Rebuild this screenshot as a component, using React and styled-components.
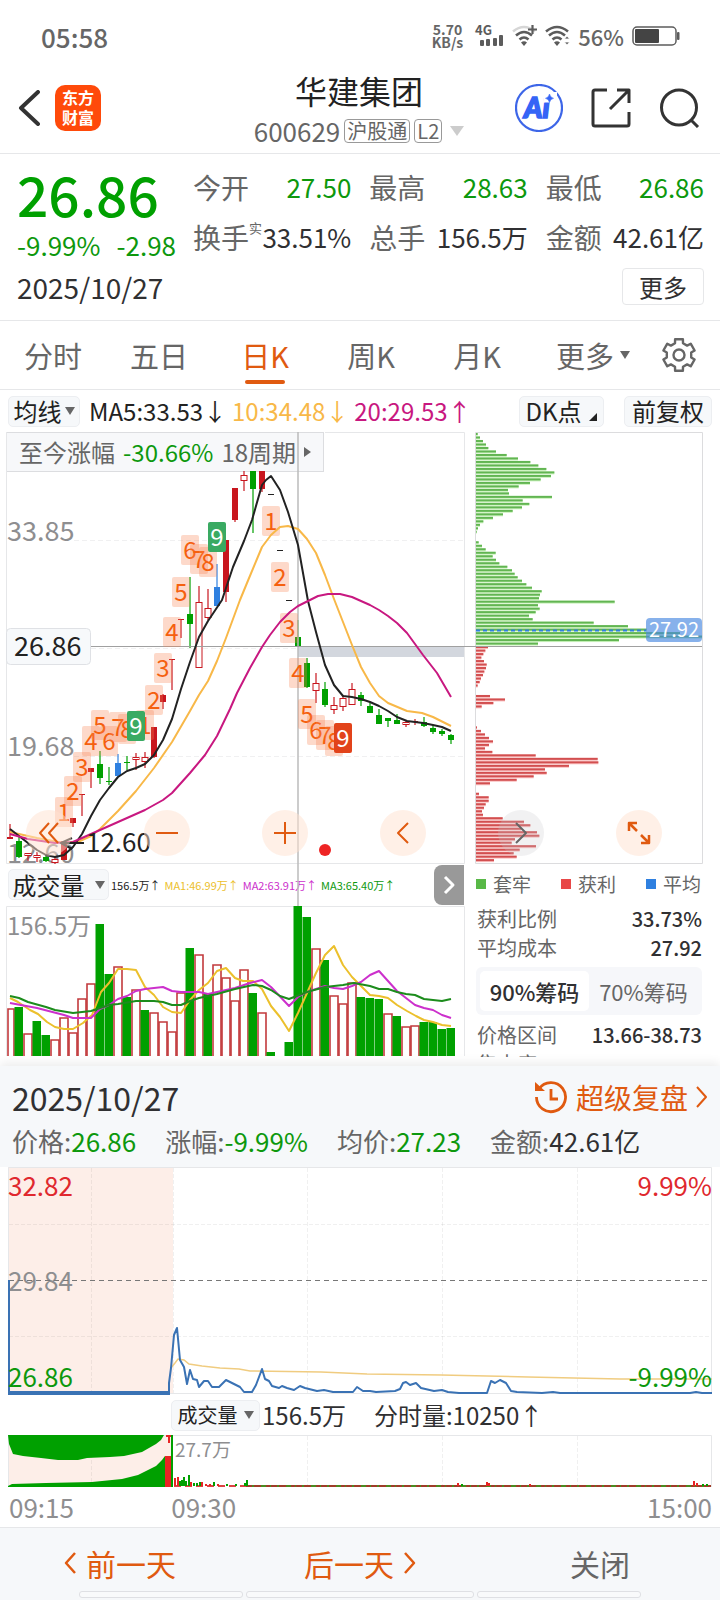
import React, { useState } from "react";
import styled, { createGlobalStyle } from "styled-components";

const C = {
  ink: "#303032",
  sub: "#666",
  mute: "#8e8e90",
  green: "#0d980d",
  candle: "#00a000",
  red: "#c8161e",
  orange: "#e05a10",
  blue: "#2f80e0",
  yellow: "#f8b848",
  pink: "#c81880",
  panel: "#f6f8fa",
  line: "#e6e7e9",
};

const Global = createGlobalStyle`
  *, *::before, *::after { box-sizing: border-box; }
  body {
    margin: 0;
    background: #fff;
    color: ${C.ink};
    font-family: "Noto Sans CJK SC", "Noto Sans", sans-serif;
  }
  button { font: inherit; color: inherit; background: none; border: 0; padding: 0; margin: 0; cursor: pointer; }
  svg { display: block; }
`;

const Page = styled.div`
  width: 100%;
  overflow: hidden;
`;

/* ---------- status bar ---------- */
const StatusBar = styled.div`
  display: flex;
  align-items: center;
  justify-content: space-between;
  height: 68px;
  padding: 4px 40px 0 41px;
  color: ${C.sub};
  font-size: 26px;
  font-weight: 500;
`;
const StatusIcons = styled.div`
  display: flex;
  align-items: center;
  gap: 8px;
  font-size: 22px;
  line-height: 28px;
`;
const NetSpeed = styled.span`
  margin-right: 3px;
  font-size: 14px;
  line-height: 13px;
  font-weight: 700;
  text-align: center;
`;

/* ---------- title bar ---------- */
const TitleBar = styled.header`
  display: grid;
  grid-template-columns: 1fr auto 1fr;
  align-items: center;
  height: 86px;
  padding: 0 20px 6px 18px;
  border-bottom: 1px solid ${C.line};
`;
const BarSide = styled.div`
  display: flex;
  align-items: center;
  justify-content: ${(p) => (p.$end ? "flex-end" : "flex-start")};
  gap: ${(p) => (p.$end ? 28 : 15)}px;
`;
const Logo = styled.div`
  width: 46px;
  height: 46px;
  padding: 2px 0;
  border-radius: 10px;
  background: #ff4a0a;
  color: #fff;
  font-size: 16px;
  line-height: 20px;
  font-weight: 700;
  text-align: center;
`;
const Stock = styled.div`
  display: flex;
  flex-direction: column;
  align-items: center;
`;
const StockName = styled.h1`
  margin: 0;
  padding-bottom: 3px;
  font-size: 32px;
  line-height: 44px;
  font-weight: 400;
  color: #222;
`;
const StockMeta = styled.div`
  display: flex;
  align-items: center;
  gap: 4px;
  font-size: 26px;
  line-height: 32px;
  color: ${C.sub};
`;
const Tag = styled.span`
  padding: 0 2px;
  border: 1px solid #999;
  border-radius: 4px;
  font-size: 20px;
  line-height: 22px;
`;
const Triangle = styled.i`
  width: 0;
  height: 0;
  margin-left: ${(p) => p.$gap || 0}px;
  border: ${(p) => p.$size || 6}px solid transparent;
  border-top: ${(p) => (p.$size || 6) + 3}px solid ${(p) => p.$color || C.sub};
  border-bottom: 0;
`;

/* ---------- quote ---------- */
const Quote = styled.section`
  display: grid;
  grid-template-columns: 159px 1fr;
  column-gap: 17px;
  padding: 8px 16px 15px 17px;
  border-bottom: 1px solid ${C.line};
`;
const Price = styled.div`
  font-size: 55px;
  line-height: 62px;
  font-weight: 500;
  color: ${C.candle};
`;
const Change = styled.div`
  display: flex;
  justify-content: space-between;
  margin-top: 4px;
  font-size: 26px;
  line-height: 34px;
  color: ${C.green};
`;
const Stats = styled.dl`
  display: grid;
  grid-template-columns: repeat(3, minmax(0, 1fr));
  column-gap: 18px;
  margin: 0;
`;
const Stat = styled.div`
  display: flex;
  justify-content: space-between;
  font-size: 28px;
  line-height: 50px;
  white-space: nowrap;
`;
const StatLabel = styled.dt`
  color: ${C.sub};
  sup { position: relative; top: -6px; font-size: 13px; line-height: 0; }
`;
const StatValue = styled.dd`
  margin: 0;
  font-size: 26px;
  color: ${(p) => (p.$down ? C.green : C.ink)};
`;
const QuoteFoot = styled.div`
  grid-column: 1 / -1;
  display: flex;
  align-items: center;
  justify-content: space-between;
  padding-top: 6px;
`;
const DateText = styled.time`
  font-size: ${(p) => (p.$large ? 32 : 28)}px;
  line-height: 36px;
`;
const MoreButton = styled.button`
  width: 82px;
  height: 37px;
  border: 1px solid ${C.line};
  border-radius: 4px;
  font-size: 24px;
  line-height: 32px;
`;

/* ---------- period tabs ---------- */
const Tabs = styled.nav`
  display: grid;
  grid-template-columns: repeat(5, 106fr) 126fr 46fr;
  align-items: center;
  justify-items: center;
  height: 69px;
  padding-right: 18px;
  border-bottom: 1px solid ${C.line};
`;
const Tab = styled.button`
  position: relative;
  display: flex;
  align-items: center;
  height: 68px;
  font-size: 29px;
  white-space: nowrap;
  color: ${(p) => (p.$active ? C.orange : C.sub)};
  &::after {
    content: "";
    position: absolute;
    left: 50%;
    bottom: 5px;
    width: 40px;
    height: 4px;
    margin-left: -20px;
    border-radius: 2px;
    background: ${(p) => (p.$active ? C.orange : "transparent")};
  }
`;

/* ---------- indicator header ---------- */
const Indicator = styled.div`
  display: flex;
  align-items: center;
  height: 42px;
  padding: 0 8px;
  font-size: 24px;
  line-height: 34px;
  white-space: nowrap;
`;
const Chip = styled.button`
  display: flex;
  align-items: center;
  justify-content: center;
  flex: none;
  width: ${(p) => p.$w}px;
  height: 31px;
  margin-left: ${(p) => p.$ml || 0}px;
  border: 1px solid #eceef1;
  border-radius: 5px;
  background: ${C.panel};
  font-size: ${(p) => p.$fs || 24}px;
  line-height: 26px;
  color: #222;
`;
const Averages = styled.div`
  display: flex;
  gap: 5px;
  flex: 1;
  margin-left: 9px;
`;
const Tone = styled.span`
  color: ${(p) => p.$c};
`;

/* ---------- chart block ---------- */
const ChartBlock = styled.section`
  position: relative;
  display: grid;
  grid-template-columns: 459fr 228fr;
  gap: 10px;
  padding: 0 17px 0 6px;
`;
const Column = styled.div`
  position: relative;
  min-width: 0;
`;
const Plot = styled.svg`
  position: relative;
  width: 100%;
  height: auto;
  overflow: visible;
  pointer-events: none;
`;
const SpanBanner = styled.button`
  position: absolute;
  left: 0;
  top: 0;
  display: flex;
  align-items: center;
  gap: 8px;
  height: 40px;
  padding: 0 12px;
  border: 1px solid #dcdde0;
  background: #f7f8fa;
  font-size: 24px;
  line-height: 36px;
  color: ${C.sub};
  white-space: nowrap;
`;
const RightArrow = styled.i`
  border: 5px solid transparent;
  border-left: 7px solid ${C.sub};
  border-right: 0;
`;
const VolumeHead = styled.div`
  display: flex;
  align-items: center;
  height: 41px;
  padding-left: 2px;
  white-space: nowrap;
  font-size: 11px;
`;
const VolumeFigures = styled.div`
  display: flex;
  gap: 4px;
  margin-left: 2px;
`;
const NextButton = styled.button`
  display: flex;
  align-items: center;
  justify-content: center;
  width: 30px;
  height: 40px;
  margin-left: auto;
  margin-right: 1px;
  border-radius: 8px 0 0 8px;
  background: #999;
`;
const Controls = styled.div`
  position: absolute;
  left: 26px;
  right: 58px;
  top: 378px;
  display: flex;
  justify-content: space-between;
`;
const Round = styled.button`
  display: flex;
  align-items: center;
  justify-content: center;
  width: 46px;
  height: 46px;
  border-radius: 50%;
  background: ${(p) => (p.$gray ? "rgba(200,200,205,.25)" : "rgba(255,225,208,.5)")};
`;

const Legend = styled.div`
  display: flex;
  justify-content: space-between;
  height: 40px;
  padding: 0 2px 0 1px;
  font-size: 19px;
  line-height: 40px;
  color: ${C.sub};
`;
const LegendItem = styled.span`
  display: flex;
  align-items: center;
  gap: 7px;
  &::before { content: ""; width: 10px; height: 10px; background: ${(p) => p.$c}; }
`;
const ChipInfo = styled.div`
  height: 153px;
  overflow: hidden;
`;
const InfoRow = styled.div`
  display: flex;
  justify-content: space-between;
  padding: 0 1px 0 2px;
  font-size: 20px;
  line-height: 29px;
  color: ${C.sub};
  b { font-weight: 500; color: ${C.ink}; }
`;
const Segmented = styled.div`
  display: grid;
  grid-template-columns: 1fr 1fr;
  height: 48px;
  margin: 5px 1px 5px;
  padding: 4px;
  border-radius: 6px;
  background: #f6f7fa;
`;
const Segment = styled.button`
  border-radius: 5px;
  font-size: 22px;
  line-height: 36px;
  white-space: nowrap;
  background: ${(p) => (p.$active ? "#fff" : "transparent")};
  color: ${(p) => (p.$active ? C.ink : C.sub)};
  font-weight: ${(p) => (p.$active ? 500 : 400)};
`;

/* ---------- day sheet ---------- */
const Sheet = styled.section`
  position: relative;
  margin-top: 9px;
  box-shadow: 0 -3px 10px rgba(0, 0, 0, 0.08);
  background: #fff;
`;
const SheetHead = styled.div`
  padding: 8px 12px 0;
  height: 101px;
  background: ${C.panel};
`;
const SheetTop = styled.div`
  display: flex;
  align-items: center;
  justify-content: space-between;
  height: 45px;
`;
const Replay = styled.button`
  display: flex;
  align-items: center;
  gap: 8px;
  font-size: 28px;
  line-height: 40px;
  color: ${C.orange};
`;
const DayFigures = styled.div`
  display: flex;
  gap: 29px;
  font-size: 26px;
  line-height: 44px;
  color: ${C.sub};
  white-space: nowrap;
`;
const DayVolumeHead = styled.div`
  display: flex;
  align-items: center;
  height: 40px;
  padding: 0 8px 0 171px;
  font-size: 24px;
  line-height: 34px;
  white-space: nowrap;
`;
const Spaced = styled.span`
  margin-left: ${(p) => p.$ml}px;
`;
const TimeAxis = styled.div`
  display: grid;
  grid-template-columns: 162fr 270fr 270fr;
  height: 39px;
  padding: 0 8px 0 9px;
  font-size: 26px;
  line-height: 38px;
  color: ${C.mute};
  span:last-child { text-align: right; }
`;
const BottomBar = styled.footer`
  display: grid;
  grid-template-columns: repeat(3, 1fr);
  height: 64px;
  border-top: 1px solid ${C.line};
  background: ${C.panel};
`;
const BottomButton = styled.button`
  display: flex;
  align-items: center;
  justify-content: center;
  gap: 9px;
  padding-top: 6px;
  font-size: 30px;
  line-height: 40px;
  color: ${(p) => (p.$plain ? C.sub : C.orange)};
`;
const Handles = styled.div`
  display: grid;
  grid-template-columns: 164fr 227fr 164fr;
  gap: 3px;
  height: 9px;
  padding: 0 79px 2px;
  background: ${C.panel};
`;
const Handle = styled.i`
  border: 1px solid #dfe0e4;
  border-radius: 3px;
  background: #f9fafb;
`;

/* ---------- icons ---------- */
const Stroke = ({ w, h, d, sw = 2, color = C.orange, cap = "butt" }) => (
  <svg width={w} height={h} viewBox={`0 0 ${w} ${h}`} fill="none" stroke={color} strokeWidth={sw} strokeLinecap={cap} strokeLinejoin="round" aria-hidden="true">
    <path d={d} />
  </svg>
);

const SignalIcon = () => (
  <svg width="30" height="24" viewBox="0 0 30 24" fill="#5c5c5c" overflow="visible" aria-hidden="true">
    <text x="1" y="11" fontSize="13" fontWeight="700">4G</text>
    <rect x="6" y="16" width="4" height="6" rx="1" />
    <rect x="12" y="15" width="4" height="7" rx="1" />
    <rect x="19" y="14" width="4" height="8" rx="1" />
    <rect x="25" y="11" width="4" height="11" rx="1" />
  </svg>
);
const WifiIcon = ({ plus }) => (
  <svg width="25" height="22" viewBox="0 0 25 22" fill="none" stroke="#5c5c5c" strokeWidth="2.6" aria-hidden="true">
    <path d="M1 6.5Q12 -2.5 23 6.5" stroke={plus ? "#d6d6d6" : "#5c5c5c"} />
    <path d="M4 10.5Q12 3.5 20 10.5" />
    <path d="M7.500 14.500Q12 10.500 16.500 14.500" />
    <path d="M9 17.500L12 21L15 17.500Q12 15 9 17.500Z" fill="#5c5c5c" stroke="none" />
    {plus ? (
      <path d="M16 4.500H25M20.500 0V9" stroke="#5c5c5c" strokeWidth="2.200" />
    ) : (
      <path d="M22 11L24.500 14H19.500ZM22 20L24.500 17H19.500Z" fill="#5c5c5c" stroke="#fff" strokeWidth=".8" />
    )}
  </svg>
);
const BatteryIcon = () => (
  <svg width="48" height="20" viewBox="0 0 48 20" aria-hidden="true">
    <rect x="1" y="1" width="43" height="18" rx="4" fill="none" stroke="#5c5c5c" strokeWidth="1.500" />
    <rect x="3" y="3" width="24" height="14" rx="1" fill="#444" />
    <rect x="45" y="6" width="2.500" height="8" rx="1" fill="#5c5c5c" />
  </svg>
);
const AiIcon = () => (
  <svg width="48" height="48" viewBox="0 0 48 48" aria-hidden="true">
    <circle cx="24" cy="24" r="23" fill="none" stroke="#3d66e8" strokeWidth="2.200" />
    <text x="9" y="34" fontFamily="Lato" fontSize="28" fontWeight="900" fontStyle="italic" fill="#3564f6" stroke="#3564f6" strokeWidth="1.600">Ai</text>
    <path d="M29 8H42V18.500H29Z" fill="#fff" />
    <path d="M34.500 10Q35.200 13.600 38.500 14.300Q35.200 15 34.500 18.500Q33.800 15 30.500 14.300Q33.800 13.600 34.500 10Z" fill="#3564f6" stroke="#3564f6" strokeWidth=".6" />
  </svg>
);
const gearPath = (() => {
  const pts = [];
  for (let i = 0; i < 6; i++) {
    [[-14, 16.2], [14, 16.2], [19, 12.4], [41, 12.4]].forEach(([a, r]) => {
      const t = ((i * 60 + a - 90) * Math.PI) / 180;
      pts.push(`${(18 + r * Math.cos(t)).toFixed(1)} ${(18 + r * Math.sin(t)).toFixed(1)}`);
    });
  }
  return `M${pts.join("L")}Z`;
})();
const GearIcon = () => (
  <svg width="36" height="36" viewBox="0 0 36 36" fill="none" stroke={C.sub} strokeWidth="2.400" strokeLinejoin="round" aria-hidden="true">
    <path d={gearPath} />
    <circle cx="18" cy="18" r="5.500" />
  </svg>
);
const ReplayIcon = () => (
  <svg width="34" height="34" viewBox="0 0 34 34" fill="none" stroke={C.orange} strokeWidth="2.800" aria-hidden="true">
    <path d="M5 9A14.500 14.500 0 1 1 2.500 17" />
    <path d="M17 9V19H24" />
    <path d="M1 2V11H11Z" fill={C.orange} stroke="none" />
  </svg>
);

/* ---------- data ---------- */
const cx = (i) => 10 + 9 * i;
/* kind, body top, body bottom, wick top, wick bottom */
const candles = [
  ["r", 837, 839, 824, 839], ["g", 841, 857, 837, 858], ["h", 853, 856, 853, 861], ["h", 855, 858, 852, 862],
  ["g", 857, 861, 855, 862], ["h", 859, 863, 857, 864], ["r", 841, 860, 841, 860], ["r", 818, 823, 818, 827],
  ["r", 794, 795, 794, 816], ["r", 768, 772, 768, 788], ["g", 764, 778, 751, 784], ["g", 781, 782, 767, 785],
  ["b", 763, 776, 754, 777], ["g", 762, 763, 756, 770], ["h", 757, 760, 753, 770], ["h", 757, 762, 752, 768],
  ["r", 727, 757, 727, 758], ["r", 695, 702, 694, 709], ["r", 659, 660, 659, 690], ["r", 619, 620, 619, 638],
  ["g", 614, 624, 577, 648], ["h", 602, 668, 586, 668], ["h", 608, 618, 589, 620], ["b", 587, 606, 564, 606],
  ["r", 540, 592, 540, 602], ["r", 488, 520, 488, 522], ["h", 475, 481, 471, 491], ["g", 471, 489, 471, 533],
  ["r", 471, 489, 471, 492], ["d", 494, 495, 494, 495], ["d", 550, 551, 550, 551], ["d", 600, 601, 600, 601],
  ["g", 637, 647, 620, 647], ["g", 663, 687, 658, 688], ["h", 683, 691, 673, 703], ["g", 689, 705, 682, 707],
  ["h", 705, 710, 697, 714], ["h", 698, 707, 695, 711], ["h", 689, 705, 683, 705], ["g", 695, 701, 692, 706],
  ["g", 706, 713, 703, 713], ["g", 715, 724, 709, 724], ["g", 718, 721, 718, 727], ["g", 720, 724, 714, 724],
  ["h", 722, 725, 720, 727], ["r", 721, 722, 719, 725], ["g", 722, 726, 717, 727], ["g", 728, 732, 725, 734],
  ["g", 731, 734, 729, 736], ["g", 735, 740, 734, 744],
];
const ma5 = "10,829 19,836 28,843 37,850 46,855 55,857 64,855 73,847 82,834 91,816 100,800 109,788 118,777 127,771 136,768 145,764 154,755 163,740 172,719 181,689 190,662 199,637 208,621 222,600 233,567 244,541 252,520 262,485 266,480 271,476 280,490 288,512 298,545 308,601 316,632 325,665 334,685 343,696 352,697 361,699 370,702 379,706 388,711 397,717 407,721 423,723 433,725 442,727 451,731";
const ma10 = "10,832 37,838 64,843 80,841 91,836 100,829 109,820 118,811 136,791 154,768 172,742 190,711 199,695 208,681 217,661 226,638 240,600 247,583 262,547 271,535 280,527 288,526 298,529 307,539 316,553 325,575 334,599 343,622 352,645 361,667 370,683 379,696 388,703 407,711 422,713 433,717 451,726";
const ma20 = "10,834 28,839 55,843 73,842 91,834 109,826 127,818 145,810 163,800 172,793 190,773 205,755 217,736 230,709 237,693 250,668 262,647 270,635 280,622 290,612 298,606 308,601 318,596 328,594 340,594 352,597 361,601 370,605 379,610 388,616 397,623 407,633 423,655 437,673 451,697";
const marks = [
  ["1", 0, 64, 812], ["2", 0, 73, 791], ["3", 0, 82, 767], ["4", 0, 91, 741], ["5", 0, 100, 725], ["6", 0, 109, 741],
  ["7", 0, 118, 727], ["8", 0, 127, 729], ["1", 0, 145, 725], ["9", 1, 136, 726], ["2", 0, 154, 700], ["3", 0, 163, 668],
  ["4", 0, 172, 632], ["5", 0, 181, 592], ["6", 0, 190, 550], ["7", 0, 199, 559], ["8", 0, 208, 562], ["9", 1, 217, 537],
  ["1", 0, 271, 521], ["2", 0, 280, 577], ["3", 0, 289, 628], ["4", 0, 298, 673], ["5", 0, 307, 714], ["6", 0, 316, 730],
  ["7", 0, 325, 735], ["8", 0, 334, 741], ["9", 2, 343, 738],
];
const volumes = [
  ["r", 1008], ["g", 1007], ["r", 1033], ["g", 1021], ["g", 1035], ["r", 1039], ["r", 1017], ["r", 1032], ["r", 998], ["r", 983],
  ["g", 924], ["g", 974], ["r", 966], ["g", 997], ["r", 989], ["g", 1010], ["r", 1012], ["r", 1021], ["r", 1031], ["r", 992],
  ["g", 948], ["r", 954], ["g", 993], ["r", 964], ["r", 977], ["r", 1000], ["r", 969], ["g", 993], ["r", 1012], ["g", 1052],
  null, ["g", 1042], ["g", 906], ["g", 917], ["r", 948], ["g", 960], ["r", 995], ["r", 1003], ["r", 982], ["g", 997],
  ["g", 998], ["g", 999], ["r", 1013], ["g", 1016], ["r", 1026], ["r", 1025], ["g", 1022], ["g", 1022], ["g", 1029], ["g", 1028],
];
const vol1 = "10,998 18,1002 30,1010 38,1014 47,1022 55,1027 64,1029 73,1029 83,1023 92,1015 101,992 109,983 118,969 127,969 136,970 145,987 154,995 163,1007 172,1012 181,1013 190,1000 199,990 208,983 217,971 226,968 235,978 243,981 253,981 262,989 271,1006 280,1017 289,1031 298,1013 307,993 316,973 325,955 334,946 343,965 352,977 361,986 370,995 379,996 388,998 397,1005 407,1011 416,1016 424,1020 433,1022 442,1025 451,1026";
const vol2 = "10,1003 37,1008 64,1015 73,1018 91,1018 100,1009 109,1005 118,999 127,996 136,991 145,989 163,987 172,991 181,992 199,992 208,994 217,992 235,988 250,983 262,980 271,987 289,1006 298,997 307,992 325,986 334,988 343,989 352,986 361,982 370,975 379,971 388,981 397,991 406,998 415,1005 424,1008 433,1010 442,1015 451,1018";
const vol3 = "10,996 19,998 28,1002 46,1007 55,1010 73,1013 91,1011 109,1005 118,1004 136,1001 154,1001 163,1002 172,1005 181,1005 190,1001 199,998 217,994 235,989 253,985 262,986 271,990 280,996 289,999 307,992 325,987 343,985 354,983 370,986 379,989 388,989 397,992 406,994 415,995 424,999 433,1000 442,1001 451,999";
/* chip distribution, one length in thirds of a pixel per price step */
const chips = [
  5, 12, 21, 30, 37, 60, 92, 126, 163, 187, 211, 235, 225, 194, 162, 128, 96, 99, 228, 140, 160, 138, 110, 81, 51, 22, 12, 6, 2, 0, 0,
  8, 18, 29, 59, 50, 60, 70, 94, 108, 116, 125, 138, 151, 168, 197, 192, 189, 416, 186, 191, 179, 159, 170, 353, 456, 512, 612, 678, 429, 186,
  36, 28, 22, 16, 24, 32, 30, 25, 21, 15, 11, 5, 0, 0, 42, 87, 52, 17, 0, 0, 0, 0, 0, 3, 15, 27, 39, 51, 39, 27, 49, 179, 365, 367, 279, 207, 212,
  173, 122, 42, 0, 0, 9, 38, 38, 29, 24, 18, 21, 80, 144, 163, 135, 183, 190, 117, 107, 180, 131, 113, 122, 54,
];
const dayLine = "9,1280 9,1393 169,1393 169,1383 171,1368 174,1335 177,1328 180,1360 184,1367 187,1384 190,1370 193,1379 197,1380 199,1387 204,1381 208,1381 212,1387 219,1387 226,1380 232,1383 240,1387 244,1392 252,1392 256,1385 262,1369 265,1379 269,1381 272,1386 279,1388 282,1386 287,1388 294,1390 300,1386 305,1388 317,1391 324,1390 333,1392 353,1392 357,1387 363,1391 370,1391 376,1392 395,1391 400,1389 403,1383 406,1382 410,1385 416,1383 421,1388 434,1391 442,1390 448,1392 459,1393 487,1393 491,1381 495,1383 500,1380 506,1383 511,1391 517,1392 542,1393 553,1392 560,1393 690,1393 696,1392 702,1393 712,1393";
const dayAvg = "171,1368 175,1363 178,1359 184,1360 189,1364 202,1366 220,1368 239,1369 250,1371 321,1372 367,1374 441,1375 528,1377 620,1379 712,1379";
const dayBars = [
  [174, 8, 1], [177, 9, 1], [179, 5, 0], [181, 6, 0], [183, 9, 0], [185, 5, 0], [188, 11, 0], [190, 4, 1], [193, 3, 0], [196, 3, 0],
  [199, 4, 0], [201, 4, 1], [205, 2, 1], [209, 2, 1], [213, 4, 0], [217, 2, 1], [226, 2, 0], [235, 2, 0], [244, 3, 0], [246, 6, 0],
  [457, 3, 1], [461, 2, 0], [486, 4, 1], [488, 3, 1], [529, 2, 1], [693, 5, 1], [696, 3, 1], [702, 2, 0], [706, 2, 0],
];

/* ---------- charts ---------- */
const bodyColor = { r: C.red, g: C.candle, b: C.blue, h: C.red, d: "#222" };

const KLine = () => (
  <Plot viewBox="6 432 459 432" role="img" aria-label="日K线图">
    <g stroke={C.line} fill="none">
      <path d="M6.500 432V863.500H464.500V432.500H325" strokeWidth="1" />
      <path d="M74 540.500H464M91 648.500H464M74 756.500H464" stroke="#f0f0f1" strokeDasharray="5 3" />
    </g>
    <rect x="298" y="647" width="166" height="10" fill="#d3d7de" />
    <g fill={C.mute} fontSize="27">
      <text x="7" y="541">33.85</text>
      <text x="7" y="756">19.68</text>
      <text x="7" y="863">12.60</text>
    </g>
    {candles.map(([k, t, b, wt, wb], i) => (
      <g key={i} fill={k === "h" ? "#fff" : bodyColor[k]} stroke={bodyColor[k]}>
        {k !== "d" && <path d={`M${cx(i)} ${wt}V${wb}`} strokeWidth="2" strokeOpacity=".6" />}
        {k === "h" ? (
          <rect x={cx(i) - 3} y={t + 0.5} width="6" height={Math.max(b - t - 1, 1)} />
        ) : (
          <rect x={cx(i) - 3} y={t} width="6" height={Math.max(b - t, 1)} stroke="none" />
        )}
      </g>
    ))}
    <path d="M298 432V906" stroke="#bbb" strokeWidth="2" strokeOpacity=".75" />
    <path d="M90 646.500H475" stroke="#a0a0a0" />
    <g fontSize="24" textAnchor="middle">
      {marks.map(([n, kind, x, y], i) => (
        <g key={i}>
          <rect x={x - 9} y={y - 15} width="18" height="30" rx="2" fill={["rgba(250,130,80,.3)", "#3aaa62", "#e2431a"][kind]} />
          <text x={x} y={y + 9} fill={kind ? "#fff" : "#f5600f"}>{n}</text>
        </g>
      ))}
    </g>
    <g fill="none" strokeWidth="2" strokeLinejoin="round">
      <polyline points={ma10} stroke={C.yellow} />
      <polyline points={ma5} stroke="#222" />
      <polyline points={ma20} stroke={C.pink} />
      <path d="M72 838L61 843L72 849M61 843H84" stroke="#222" />
    </g>
    <text x="86" y="852" fontSize="26" fill="#222">12.60</text>
    <rect x="6.500" y="628.500" width="84" height="36" rx="4" fill="#f7f9fb" stroke="#dfe1e5" />
    <text x="14" y="656" fontSize="27" fill="#222">26.86</text>
    <circle cx="325" cy="850" r="6" fill="#ee2424" />
  </Plot>
);

const VolumePlot = () => (
  <Plot viewBox="6 905 459 151" role="img" aria-label="成交量图">
    <path d="M6.500 1056V906.500H464.500V1056" fill="none" stroke={C.line} />
    <text x="7" y="935" fontSize="24" fill={C.mute}>156.5万</text>
    {volumes.map((v, i) => {
      if (!v) return null;
      const [k, y] = v;
      const x = i ? cx(i) - 5 : 7;
      const w = cx(i) + 4 - x;
      return k === "g" ? (
        <rect key={i} x={x + 0.5} y={y} width={w - 0.5} height={1056 - y} fill={C.candle} />
      ) : (
        <path key={i} d={`M${x + 1} 1056V${y + 1}H${x + w}V1056`} fill="#fff" stroke="#c23a3c" strokeWidth="1.600" />
      );
    })}
    <g fill="none" strokeWidth="2" strokeLinejoin="round">
      <polyline points={vol1} stroke="#ecc02c" />
      <polyline points={vol2} stroke="#cc30cc" />
      <polyline points={vol3} stroke="#1c8c1c" />
    </g>
  </Plot>
);

const ChipPlot = () => (
  <Plot viewBox="475 432 228 432" role="img" aria-label="筹码分布图">
    <path d="M475.500 432.500H702.500V863.500H475.500Z" fill="none" stroke="#dcdcde" />
    {chips.map((n, k) => {
      const y = 433 + k * 3.493;
      const up = k < 61;
      return n ? (
        <g key={k}>
          <rect x="476" y={y} width={n / 3} height="3" fill={up ? "#cdf3bf" : "#fbc4c4"} />
          <rect x="476" y={y} width={n / 3} height="2" fill={up ? "#62b552" : "#d24f50"} />
        </g>
      ) : null;
    })}
    <path d="M476 630.500H646" stroke={C.blue} strokeWidth="2" strokeDasharray="4 3" />
    <path d="M475 646.500H702" stroke="#a0a0a0" />
    <rect x="646" y="618" width="56" height="24" rx="4" fill="rgba(70,135,225,.65)" />
    <text x="674" y="637" fontSize="20" fill="#fff" textAnchor="middle">27.92</text>
  </Plot>
);

const DayPrice = () => (
  <Plot viewBox="0 1167 720 228" role="img" aria-label="分时图">
    <rect x="8" y="1167" width="165" height="226" fill="#fdeee8" />
    <path d="M8.500 1393.500V1167.500H711.500V1393.500Z" fill="none" stroke={C.line} />
    <path d="M91.500 1168V1393M173.500 1168V1393M307.500 1168V1393M442.500 1168V1393M577.500 1168V1393M9 1224.500H711M9 1336.500H711" stroke="#000" strokeOpacity=".06" strokeDasharray="4 2" />
    <g fontSize="26">
      <text x="8" y="1196" fill="#e0282e">32.82</text>
      <text x="8" y="1291" fill={C.mute}>29.84</text>
      <text x="712" y="1196" fill="#e0282e" textAnchor="end">9.99%</text>
    </g>
    <path d="M9 1280.500H711" stroke="#777" strokeDasharray="5 4" />
    <polyline points={dayAvg} fill="none" stroke="#f0cc80" strokeWidth="1.500" />
    <polyline points={dayLine} fill="none" stroke="#3a72b4" strokeWidth="2" strokeLinejoin="round" />
    <path d="M8 1393H170" stroke="#3a72b4" strokeWidth="4" />
    <g fontSize="26" fill={C.green}>
      <text x="8" y="1387">26.86</text>
      <text x="712" y="1387" textAnchor="end">-9.99%</text>
    </g>
  </Plot>
);

const DayVolume = () => (
  <Plot viewBox="0 1435 720 53" role="img" aria-label="分时成交量图">
    <rect x="8" y="1435" width="165" height="52" fill="#fdeee8" />
    <path d="M8.500 1487V1435.500H711.500V1487" fill="none" stroke={C.line} />
    <path d="M91.500 1436V1486M307.500 1436V1486M442.500 1436V1486M577.500 1436V1486" stroke="#000" strokeOpacity=".06" strokeDasharray="4 2" />
    <g fill={C.candle}>
      <path d="M8 1435L9 1444L13 1454L23 1456L41 1458L58 1460H78L87 1458L110 1457L124 1456L142 1452L156 1444L161 1440L164 1435Z" />
      <path d="M8 1487V1486L12 1484L46 1483L92 1482L122 1479L138 1475L156 1466L162 1460L165 1456V1487Z" />
      <rect x="171" y="1435" width="2" height="52" />
    </g>
    <path d="M165 1456H171V1487H165ZM166 1435H171V1437H170V1443H168V1437H166Z" fill="#e82424" />
    <path d="M174 1486H246" stroke="#d44" strokeWidth="2" strokeDasharray="7 4" />
    <path d="M246 1486H711" stroke="#a03c28" strokeWidth="2" />
    <path d="M252 1486H711" stroke="#4b8a20" strokeWidth="2" strokeDasharray="2 7 5 4 1 6" />
    {dayBars.map(([x, h, up]) => (
      <rect key={x} x={x} y={1486 - h} width="2" height={h} fill={up ? "#e82424" : C.candle} />
    ))}
    <text x="175" y="1457" fontSize="19" fill={C.mute}>27.7万</text>
  </Plot>
);

/* ---------- page ---------- */
export default function App() {
  const [tab, setTab] = useState("日K");
  const [seg, setSeg] = useState("90%筹码");
  return (
    <Page>
      <Global />
      <StatusBar>
        <span>05:58</span>
        <StatusIcons>
          <NetSpeed>5.70<br />KB/s</NetSpeed>
          <SignalIcon />
          <WifiIcon plus />
          <WifiIcon />
          <span>56%</span>
          <BatteryIcon />
        </StatusIcons>
      </StatusBar>

      <TitleBar>
        <BarSide>
          <button aria-label="返回"><Stroke w={22} h={36} d="M20 2L3 18L20 34" sw={4} color="#333" cap="round" /></button>
          <Logo>东方<br />财富</Logo>
        </BarSide>
        <Stock>
          <StockName>华建集团</StockName>
          <StockMeta>
            600629
            <Tag>沪股通</Tag>
            <Tag>L2</Tag>
            <Triangle $size={7} $gap={4} $color="#ccc" />
          </StockMeta>
        </Stock>
        <BarSide $end>
          <button aria-label="AI"><AiIcon /></button>
          <button aria-label="分享"><Stroke w={40} h={40} sw={3} color="#333" d="M16 2H4Q2 2 2 4V36Q2 38 4 38H36Q38 38 38 36V24M26 2H38V15M38 2L19 21" /></button>
          <button aria-label="搜索"><Stroke w={41} h={40} sw={3} color="#333" d="M20 2A17.500 17.500 0 1 0 20 37A17.500 17.500 0 1 0 20 2M32 32L39 39" /></button>
        </BarSide>
      </TitleBar>

      <Quote>
        <div>
          <Price>26.86</Price>
          <Change><span>-9.99%</span><span>-2.98</span></Change>
        </div>
        <Stats>
          <Stat><StatLabel>今开</StatLabel><StatValue $down>27.50</StatValue></Stat>
          <Stat><StatLabel>最高</StatLabel><StatValue $down>28.63</StatValue></Stat>
          <Stat><StatLabel>最低</StatLabel><StatValue $down>26.86</StatValue></Stat>
          <Stat><StatLabel>换手<sup>实</sup></StatLabel><StatValue>33.51%</StatValue></Stat>
          <Stat><StatLabel>总手</StatLabel><StatValue>156.5万</StatValue></Stat>
          <Stat><StatLabel>金额</StatLabel><StatValue>42.61亿</StatValue></Stat>
        </Stats>
        <QuoteFoot>
          <DateText>2025/10/27</DateText>
          <MoreButton>更多</MoreButton>
        </QuoteFoot>
      </Quote>

      <Tabs>
        {["分时", "五日", "日K", "周K", "月K"].map((t) => (
          <Tab key={t} $active={t === tab} onClick={() => setTab(t)}>{t}</Tab>
        ))}
        <Tab>更多<Triangle $size={5} $gap={6} /></Tab>
        <button aria-label="设置"><GearIcon /></button>
      </Tabs>

      <Indicator>
        <Chip $w={72}>均线<Triangle $size={5} $gap={3} /></Chip>
        <Averages>
          <Tone $c="#222">MA5:33.53↓</Tone>
          <Tone $c={C.yellow}>10:34.48↓</Tone>
          <Tone $c={C.pink}>20:29.53↑</Tone>
        </Averages>
        <Chip $w={85}>
          DK点
          <svg width="16" height="20" viewBox="0 0 16 20" aria-hidden="true"><path d="M15 12V20H7Z" fill="#222" /></svg>
        </Chip>
        <Chip $w={88} $ml={20}>前复权</Chip>
      </Indicator>

      <ChartBlock>
        <Column>
          <SpanBanner>
            <span>至今涨幅</span>
            <Tone $c={C.green}>-30.66%</Tone>
            <span>18周期</span>
            <RightArrow />
          </SpanBanner>
          <KLine />
          <VolumeHead>
            <Chip $w={101}>成交量<Triangle $size={5} $gap={10} /></Chip>
            <VolumeFigures>
              <Tone $c="#222">156.5万↑</Tone>
              <Tone $c="#ecc02c">MA1:46.99万↑</Tone>
              <Tone $c="#cc30cc">MA2:63.91万↑</Tone>
              <Tone $c={C.green}>MA3:65.40万↑</Tone>
            </VolumeFigures>
            <NextButton aria-label="更多指标"><Stroke w={14} h={20} sw={3} color="#fff" d="M3 2L11 10L3 18" /></NextButton>
          </VolumeHead>
          <VolumePlot />
        </Column>
        <Column>
          <ChipPlot />
          <Legend>
            <LegendItem $c="#58b847">套牢</LegendItem>
            <LegendItem $c="#e84848">获利</LegendItem>
            <LegendItem $c="#2f80e0">平均</LegendItem>
          </Legend>
          <ChipInfo>
            <InfoRow>获利比例<b>33.73%</b></InfoRow>
            <InfoRow>平均成本<b>27.92</b></InfoRow>
            <Segmented>
              {["90%筹码", "70%筹码"].map((s) => (
                <Segment key={s} $active={s === seg} onClick={() => setSeg(s)}>{s}</Segment>
              ))}
            </Segmented>
            <InfoRow>价格区间<b>13.66-38.73</b></InfoRow>
            <InfoRow>集中度</InfoRow>
          </ChipInfo>
        </Column>
        <Controls>
          <Round aria-label="最左"><Stroke w={22} h={24} d="M11 2L2 12L11 22M20 2L11 12L20 22" /></Round>
          <Round aria-label="缩小"><Stroke w={24} h={24} d="M1 12H23" /></Round>
          <Round aria-label="放大"><Stroke w={24} h={24} d="M1 12H23M12 1V23" /></Round>
          <Round aria-label="左移"><Stroke w={14} h={24} d="M12 2L2 12L12 22" /></Round>
          <Round aria-label="右移" $gray><Stroke w={14} h={24} color="#666" d="M2 2L12 12L2 22" /></Round>
          <Round aria-label="全屏"><Stroke w={24} h={24} sw={2.5} d="M2 10V2H10M2 2L10 10M14 14L22 22M22 14V22H14" /></Round>
        </Controls>
      </ChartBlock>

      <Sheet>
        <SheetHead>
          <SheetTop>
            <DateText $large>2025/10/27</DateText>
            <Replay>
              <ReplayIcon />
              超级复盘
              <Stroke w={12} h={22} d="M1 1L10 11L1 21" />
            </Replay>
          </SheetTop>
          <DayFigures>
            <span>价格:<Tone $c={C.green}>26.86</Tone></span>
            <span>涨幅:<Tone $c={C.green}>-9.99%</Tone></span>
            <span>均价:<Tone $c={C.green}>27.23</Tone></span>
            <span>金额:<Tone $c={C.ink}>42.61亿</Tone></span>
          </DayFigures>
        </SheetHead>
        <DayPrice />
        <DayVolumeHead>
          <Chip $w={89} $fs={20}>成交量<Triangle $size={5} $gap={6} /></Chip>
          <Spaced $ml={2}>156.5万</Spaced>
          <Spaced $ml={28}>分时量:10250↑</Spaced>
        </DayVolumeHead>
        <DayVolume />
        <TimeAxis><span>09:15</span><span>09:30</span><span>15:00</span></TimeAxis>
        <BottomBar>
          <BottomButton><Stroke w={13} h={22} d="M11 1L2 11L11 21" sw={2.5} />前一天</BottomButton>
          <BottomButton>后一天<Stroke w={13} h={22} d="M2 1L11 11L2 21" sw={2.5} /></BottomButton>
          <BottomButton $plain>关闭</BottomButton>
        </BottomBar>
        <Handles><Handle /><Handle /><Handle /></Handles>
      </Sheet>
    </Page>
  );
}
